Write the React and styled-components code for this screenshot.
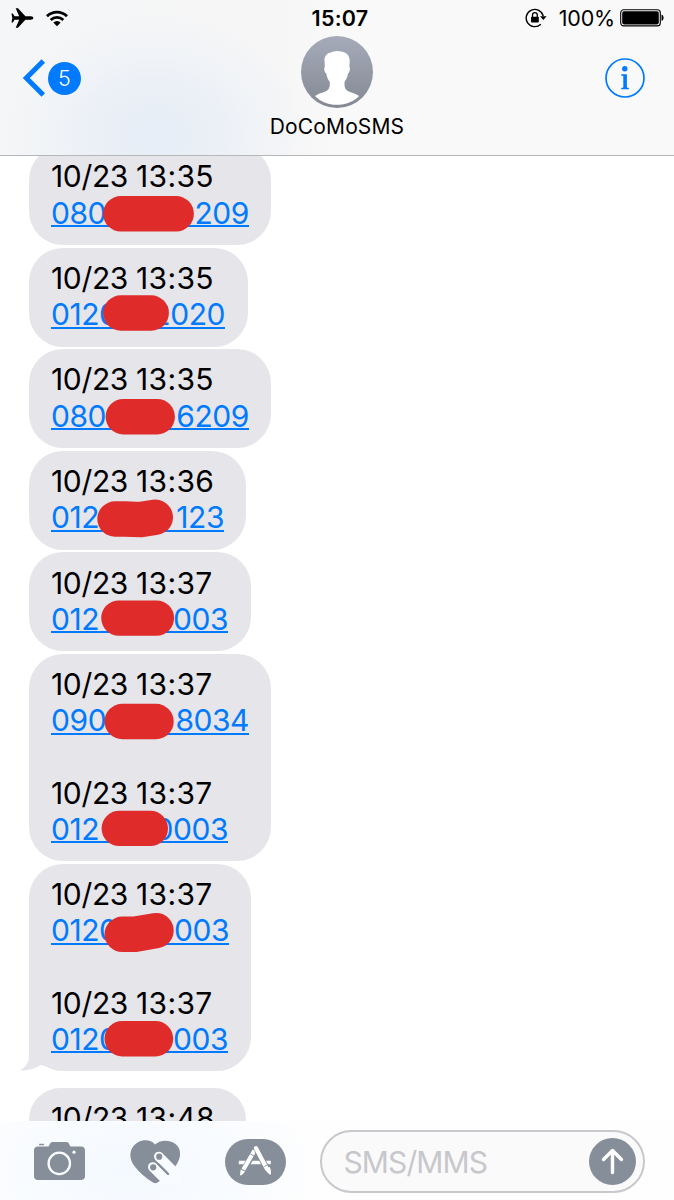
import { memo } from 'react';
import styled, { createGlobalStyle } from 'styled-components';

const BLUE = '#007aff';
const SLATE = '#868e99';

const MESSAGES = [
  {
    width: 242,
    entries: [{ date: '10/23', time: '13:35', head: '080', tail: '209', link: 198, mark: 'M69.8 18.8H125.2' }],
  },
  {
    width: 219,
    entries: [{ date: '10/23', time: '13:35', head: '0120', tail: '2020', link: 174, mark: 'M69.8 17H100.2' }],
  },
  {
    width: 242,
    entries: [{ date: '10/23', time: '13:35', head: '080', tail: '6209', link: 198, mark: 'M72.3 18.7H106.2' }],
  },
  {
    width: 217,
    entries: [
      { date: '10/23', time: '13:36', head: '012', tail: '123', link: 173, mark: 'M64 20H74L90 20.6L104.3 18.3' },
    ],
  },
  {
    width: 222,
    entries: [{ date: '10/23', time: '13:37', head: '012', tail: '003', link: 177, mark: 'M67.9 17.1H105.4' }],
  },
  {
    width: 242,
    entries: [
      { date: '10/23', time: '13:37', head: '090', tail: '8034', link: 198, mark: 'M71.2 19.5H105' },
      { date: '10/23', time: '13:37', head: '012', tail: '0003', link: 177, mark: 'M68.3 17.4H99.3' },
    ],
  },
  {
    width: 222,
    last: true,
    entries: [
      { date: '10/23', time: '13:37', head: '0120', tail: '003', link: 178, mark: 'M71.2 22.3H84L105 18.6' },
      { date: '10/23', time: '13:37', head: '0120', tail: '003', link: 177, mark: 'M71.2 17.7H104.5' },
    ],
  },
  { width: 217, entries: [{ date: '10/23', time: '13:48' }] },
];

const GlobalStyle = createGlobalStyle`
  body {
    margin: 0;
    background: #fff;
  }
`;

const Screen = styled.div`
  display: flex;
  flex-direction: column;
  width: 674px;
  height: 1200px;
  overflow: hidden;
  background: #fff;
  color: #000;
  font-family: Inter, 'Liberation Sans', sans-serif;
`;

const Header = styled.header`
  display: flex;
  flex-direction: column;
  flex: none;
  box-sizing: border-box;
  height: 156px;
  border-bottom: 1px solid #b5b6b8;
  background:
    radial-gradient(ellipse 150px 120px at 155px 135px, #e5edf7 0%, rgba(232, 238, 246, 0.7) 45%, rgba(248, 248, 248, 0) 100%),
    linear-gradient(90deg, #f5f6f7 0, #f6f6f7 280px, #f9f9f9 340px);
`;

const StatusBar = styled.div`
  display: grid;
  grid-template-columns: 1fr auto 1fr;
  align-items: center;
  height: 36px;
  padding: 0 10px 0 11px;
`;

const StatusGroup = styled.div`
  display: flex;
  align-items: center;
  justify-content: ${({ $end }) => ($end ? 'flex-end' : 'flex-start')};
  gap: ${({ $gap }) => $gap}px;
`;

const Clock = styled.span`
  margin-left: 5px;
  font-size: 21.5px;
  font-weight: 600;
  letter-spacing: 0.25px;
  line-height: 36px;
`;

const Percent = styled.span`
  font-size: 21.5px;
  letter-spacing: -0.2px;
  margin: 0 5px 0 12px;
`;

const NavBar = styled.div`
  display: grid;
  grid-template-columns: 1fr auto 1fr;
  flex: 1;
  padding: 0 29px 0 22px;
`;

const Back = styled.div`
  display: flex;
  align-items: center;
  gap: 2px;
  height: 84px;
`;

const Count = styled.span`
  width: 33px;
  height: 33px;
  border-radius: 50%;
  background: ${BLUE};
  color: #fff;
  font-size: 21.5px;
  font-weight: 300;
  line-height: 33px;
  text-align: center;
`;

const Contact = styled.div`
  display: flex;
  flex-direction: column;
  align-items: center;
  margin-left: 7px;
`;

const ContactName = styled.span`
  margin-top: 6px;
  font-size: 21px;
  letter-spacing: 0.15px;
  line-height: 26px;
`;

const Info = styled.div`
  display: flex;
  align-items: center;
  justify-content: flex-end;
  height: 83px;
`;

const Thread = styled.main`
  flex: 1;
  min-height: 0;
  overflow: hidden;
`;

const MessageList = styled.div`
  display: flex;
  flex-direction: column;
  align-items: flex-start;
  gap: 2.4px;
  margin-top: -10px;
  padding-left: 29px;
`;

const Bubble = styled.div`
  position: relative;
  box-sizing: border-box;
  width: ${({ $width }) => $width}px;
  margin-bottom: ${({ $last }) => ($last ? 14.6 : 0)}px;
  padding: 12.4px 0 ${({ $last }) => ($last ? 13.4 : 14.4)}px 22px;
  border-radius: 34px;
  background: #e5e5ea;
  font-size: 30px;
  line-height: 36.2px;
`;

const Tail = styled.svg`
  position: absolute;
  left: -10px;
  bottom: 0;
`;

const Entry = styled.div`
  & + & {
    margin-top: 36.2px;
  }
`;

const Stamp = styled.div`
  height: 36.2px;
  letter-spacing: -0.35px;
  white-space: nowrap;
`;

const Time = styled.span`
  letter-spacing: 0.3px;
`;

const Phone = styled.div`
  position: relative;
  display: flex;
  justify-content: space-between;
  box-sizing: border-box;
  width: ${({ $width }) => $width}px;
  height: 36.2px;
  color: ${BLUE};
  letter-spacing: -0.45px;
  background: linear-gradient(${BLUE}, ${BLUE}) 0 30.4px / 100% 2px no-repeat;
`;

const Mark = styled.svg`
  position: absolute;
  top: 0;
  left: 0;
  overflow: visible;
  fill: none;
  stroke: #e02b2b;
  stroke-width: 35.4;
  stroke-linecap: round;
  stroke-linejoin: round;
`;

const Toolbar = styled.footer`
  display: flex;
  align-items: center;
  flex: none;
  box-sizing: border-box;
  height: 79px;
  padding: 2px 29px 0 34px;
  background: radial-gradient(ellipse 190px 110px at 130px 50px, #f4f9ff 0%, #f8fbff 50%, #fefefe 100%);
`;

const Tools = styled.div`
  display: flex;
  align-items: center;
  width: 286px;
`;

const Tool = styled.svg`
  flex: none;
  margin-right: ${({ $gap }) => $gap}px;
`;

const Field = styled.div`
  display: flex;
  align-items: center;
  justify-content: space-between;
  flex: 1;
  box-sizing: border-box;
  height: 63px;
  padding: 0 7px 0 21.5px;
  border: 2px solid #c8c8cd;
  border-radius: 32px;
  background: #fafafa;
`;

const Placeholder = styled.span`
  color: #c7c7cc;
  font-size: 30px;
  letter-spacing: -0.9px;
`;

const StatusIcons = () => (
  <StatusGroup $gap={12}>
    <svg width='23' height='20' viewBox='0 0 23 20'>
      <path d='M22.3 10c0-1-1-1.7-2.3-1.7h-5.6L7 .3H4.7l3.5 8H3.6L1.800 5.500H.5L1.300 10l-.8 4.500h1.300l1.800-2.800h4.600l-3.500 8H7l7.400-8H20c1.300 0 2.300-.7 2.300-1.700z' />
    </svg>
    <svg width='22' height='17' viewBox='0 0 22 17' fill='none' stroke='#000' strokeWidth='2.8'>
      <path d='M1 6.2a14.2 14.2 0 0 1 20 0' />
      <path d='M4.7 10a9 9 0 0 1 12.6 0' />
      <path d='M11 16.3L7.300 12.600a5.300 5.300 0 0 1 7.400 0z' fill='#000' stroke='none' />
    </svg>
  </StatusGroup>
);

const BatteryStatus = () => (
  <StatusGroup $end $gap={0}>
    <svg width='22' height='20' viewBox='0 0 22 20'>
      <path d='M18.2 8.2A8.600 8.600 0 1 0 15.800 16.200' fill='none' stroke='#000' strokeWidth='1.4' />
      <path d='M15 8.2h6.600L18.300 12z' />
      <rect x='6' y='8.8' width='7.8' height='5.8' rx='.8' />
      <path d='M7.5 9V7a2.400 2.400 0 0 1 4.800 0v2' fill='none' stroke='#000' strokeWidth='1.3' />
    </svg>
    <Percent>100%</Percent>
    <svg width='44' height='18' viewBox='0 0 44 18'>
      <rect x='.7' y='.7' width='39.6' height='16.2' rx='3' fill='none' stroke='#000' strokeWidth='1.1' />
      <rect x='2.2' y='2.2' width='36.6' height='13.2' rx='1.8' />
      <path d='M41.5 5.500c2.800.8 2.800 5.800 0 6.600z' />
    </svg>
  </StatusGroup>
);

const Avatar = () => (
  <svg width='72' height='72' viewBox='0 0 72 72'>
    <defs>
      <linearGradient id='avatar-bg' x1='0' y1='0' x2='0' y2='1'>
        <stop offset='0' stopColor='#a5abb9' />
        <stop offset='1' stopColor='#848993' />
      </linearGradient>
    </defs>
    <circle cx='36' cy='36' r='36' fill='url(#avatar-bg)' />
    <path
      fill='#fff'
      d='M36 15c-2.500 0-4 .8-5.500 1.200-5 .9-7.200 4-7 8.800l.4 6c-1.300.7-.5 5.500 1.400 6.500.5 3.500 1.500 6 3.400 8 .2 3.500.3 6-1.700 8.200C24 56.500 18.500 56.500 14 60c5.500 5.700 13 8.800 22 8.800S52.500 65.700 58.200 60C53.500 56.500 48 56.500 45.200 53.700c-1.800-2-1.800-4.700-1.600-8.200 1.800-2 2.800-4.500 3.400-8 1.800-1 2.600-5.800 1.400-6.500l.3-6C49 18.500 44 15 36 15z'
    />
  </svg>
);

const Message = memo(({ width, entries, last }) => (
  <Bubble $width={width} $last={last}>
    {last && (
      <Tail width='40' height='34' viewBox='0 0 40 34'>
        <path d='M10 0v17c0 8-2.500 13.500-9.500 16.300C8 34 15.500 32 21.500 28L34 31V0z' fill='#e5e5ea' />
      </Tail>
    )}
    {entries.map((entry, index) => (
      <Entry key={index}>
        <Stamp>
          {entry.date} <Time>{entry.time}</Time>
        </Stamp>
        {entry.head && (
          <Phone $width={entry.link}>
            <span>{entry.head}</span>
            <span>{entry.tail}</span>
            <Mark width='140' height='36'>
              <path d={entry.mark} />
            </Mark>
          </Phone>
        )}
      </Entry>
    ))}
  </Bubble>
));

const App = () => (
  <Screen>
    <GlobalStyle />
    <Header>
      <StatusBar>
        <StatusIcons />
        <Clock>15:07</Clock>
        <BatteryStatus />
      </StatusBar>
      <NavBar>
        <Back>
          <svg width='24' height='38' viewBox='0 0 24 38' fill='none' stroke={BLUE} strokeWidth='5'>
            <path d='M21.3 2L4.300 19l17 17' />
          </svg>
          <Count>5</Count>
        </Back>
        <Contact>
          <Avatar />
          <ContactName>DoCoMoSMS</ContactName>
        </Contact>
        <Info>
          <svg width='40' height='40' viewBox='0 0 40 40'>
            <circle cx='20' cy='20' r='19' fill='none' stroke={BLUE} strokeWidth='1.7' />
            <circle cx='19.8' cy='10.7' r='2.7' fill={BLUE} />
            <path d='M16.2 16.200h5.700v13.300l2 .5v1.300h-7.700V30l2.100-.5V18l-2.100-.4z' fill={BLUE} />
          </svg>
        </Info>
      </NavBar>
    </Header>
    <Thread>
      <MessageList>
        {MESSAGES.map((message, index) => (
          <Message key={index} {...message} />
        ))}
      </MessageList>
    </Thread>
    <Toolbar>
      <Tools>
        <Tool width='51' height='40' viewBox='0 0 51 40' $gap={45}>
          <path
            fill={SLATE}
            d='M4 4.500h10.500l2-3.500C17 .3 18 0 19 0h13c1 0 2 .3 2.500 1l2 3.500H47c2.500 0 4 1.500 4 4V34c0 2.500-1.500 4-4 4H4c-2.500 0-4-1.500-4-4V8.500c0-2.500 1.500-4 4-4zM5.500 1.800h4l.7 1.500H4.700z'
          />
          <circle cx='25.3' cy='21.4' r='10.7' fill='none' stroke='#f8fbff' strokeWidth='2.3' />
          <circle cx='40' cy='10.2' r='1.6' fill='#f8fbff' />
        </Tool>
        <Tool width='51' height='44' viewBox='0 0 51 44' $gap={44}>
          <path
            fill={SLATE}
            d='M25 4.500C21-.2 14-.8 8 2.200-.5 7-2 17.500 4 25.500c5 7 12 12.500 19 17 1.500 1 3 1 4.500 0 7-4.500 13.500-10 18.500-17 5.500-8 5.500-17-.5-21.500C39.500-.5 30-.5 25 4.500z'
          />
          <path d='M28.8 16.500L53 40.700M22.800 27L45 49.200' stroke='#f8fbff' strokeWidth='9.600' strokeLinecap='round' />
          <circle cx='29.2' cy='16.7' r='3.1' fill={SLATE} />
          <circle cx='23.2' cy='27.3' r='3.1' fill={SLATE} />
          <path d='M28 23.800l10.200 10.200' stroke={SLATE} strokeWidth='2' strokeLinecap='round' />
        </Tool>
        <Tool width='61' height='46' viewBox='0 0 61 46' $gap={0}>
          <rect width='61' height='46' rx='23' fill={SLATE} />
          <g stroke='#fff' fill='none'>
            <path d='M13.8 23.500h32' strokeWidth='3.600' />
            <path d='M29.800 12L17.500 33' strokeWidth='6.200' stroke={SLATE} />
            <path d='M29.500 11.500L18.300 30.700' strokeWidth='4.200' />
            <path d='M32 11L43 32' strokeWidth='6' stroke={SLATE} />
            <path d='M31 9.200L42 30' strokeWidth='4.200' strokeLinecap='round' />
            <path d='M25.200 14.800l4.400 2.600M39.300 27.500l4.200-2.200' strokeWidth='.9' stroke={SLATE} />
          </g>
          <path d='M15.700 30.500l4.400 2.300-3.300 3.300-1.900.4zM40.300 30l4.500-2c1.200 2.500 1.300 5.400 1 7.800-2.500-.8-4.200-2.700-5.500-5.800z' fill='#fff' />
        </Tool>
      </Tools>
      <Field>
        <Placeholder>SMS/MMS</Placeholder>
        <svg width='47' height='47' viewBox='0 0 47 47'>
          <circle cx='23.5' cy='23.5' r='23.5' fill={SLATE} />
          <path
            d='M23.5 34.500V13M14.500 21.500l9-9 9 9'
            fill='none'
            stroke='#fff'
            strokeWidth='3.4'
            strokeLinecap='round'
            strokeLinejoin='round'
          />
        </svg>
      </Field>
    </Toolbar>
  </Screen>
);

export default App;
